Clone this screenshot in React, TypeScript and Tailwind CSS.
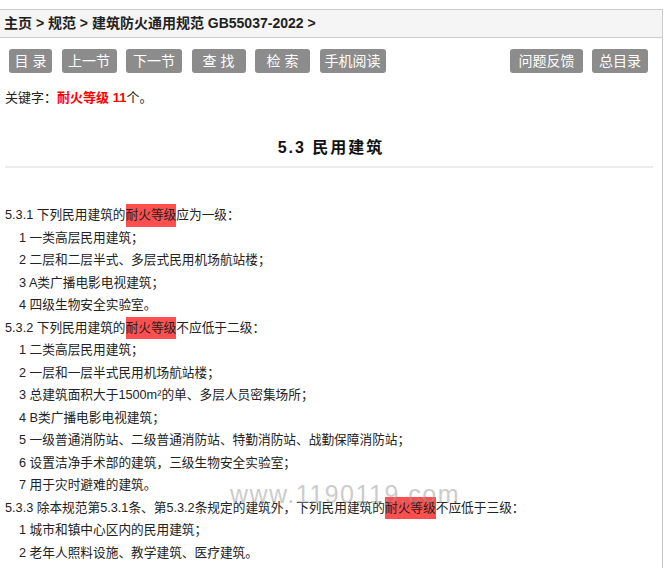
import React from "react";

const HL = ({ children }: { children: React.ReactNode }) => (
  <span className="inline-block bg-[#ff4f4f] leading-[22.5px] align-top">{children}</span>
);

const buttonsLeft: [string, string][] = [
  ["目 录", "w-[43px]"],
  ["上一节", "w-[55px]"],
  ["下一节", "w-[56px]"],
  ["查 找", "w-[54px]"],
  ["检 索", "w-[55px]"],
  ["手机阅读", "w-[66px]"],
];

const Btn = ({ label, w }: { label: string; w: string }) => (
  <div
    className={`${w} h-[24px] rounded-[3px] bg-[#8c8c8c] text-white text-[14px] flex items-center justify-center leading-none whitespace-pre`}
  >
    {label}
  </div>
);

export default function App() {
  const font = "font-['Liberation_Sans','Noto_Sans_CJK_SC',sans-serif]";
  return (
    <div className={`${font} bg-white w-[671px] h-[568px] overflow-hidden text-[#222]`}>
      <div className="relative mt-[9px] w-[663px] h-[600px] border-t border-r border-[#cccccc]">
        <div className="h-[28px] bg-[#f5f5f5] border-b border-[#cccccc] pl-[4px] flex items-center font-bold text-[14px] text-[#222] whitespace-pre">
          主页 &gt; 规范 &gt; 建筑防火通用规范 GB55037-2022 &gt;
        </div>
        <div className="pt-[11px] pl-[9px] pr-[14px] flex justify-between">
          <div className="flex gap-[9.5px]">
            {buttonsLeft.map(([l, w]) => (
              <Btn key={l} label={l} w={w} />
            ))}
          </div>
          <div className="flex gap-[9px]">
            <Btn label="问题反馈" w="w-[73px]" />
            <Btn label="总目录" w="w-[56px]" />
          </div>
        </div>
        <div className="mt-[15px] pl-[5px] text-[13px] leading-[20px]">
          关键字：<span className="text-[#ff0000] font-bold">耐火等级 11</span>个。
        </div>
        <div className="mt-[28px] text-center font-bold text-[16px] tracking-[2px] leading-[24px] text-[#111]">
          5.3 民用建筑
        </div>
        <div className="ml-[5px] mr-[9px] mt-[6px] h-[2px] bg-[#ebebeb]" />
        <div className="mt-[36px] pl-[5px] text-[12.7px] leading-[22.5px]">
          <div>
            5.3.1 下列民用建筑的<HL>耐火等级</HL>应为一级：
          </div>
          <div className="pl-[14px]">1 一类高层民用建筑；</div>
          <div className="pl-[14px]">2 二层和二层半式、多层式民用机场航站楼；</div>
          <div className="pl-[14px]">3 A类广播电影电视建筑；</div>
          <div className="pl-[14px]">4 四级生物安全实验室。</div>
          <div>
            5.3.2 下列民用建筑的<HL>耐火等级</HL>不应低于二级：
          </div>
          <div className="pl-[14px]">1 二类高层民用建筑；</div>
          <div className="pl-[14px]">2 一层和一层半式民用机场航站楼；</div>
          <div className="pl-[14px]">
            3 总建筑面积大于1500m²的单、多层人员密集场所；
          </div>
          <div className="pl-[14px]">4 B类广播电影电视建筑；</div>
          <div className="pl-[14px]">
            5 一级普通消防站、二级普通消防站、特勤消防站、战勤保障消防站；
          </div>
          <div className="pl-[14px]">6 设置洁净手术部的建筑，三级生物安全实验室；</div>
          <div className="pl-[14px]">7 用于灾时避难的建筑。</div>
          <div>
            5.3.3 除本规范第5.3.1条、第5.3.2条规定的建筑外，下列民用建筑的<HL>耐火等级</HL>不应低于三级：
          </div>
          <div className="pl-[14px]">1 城市和镇中心区内的民用建筑；</div>
          <div className="pl-[14px]">2 老年人照料设施、教学建筑、医疗建筑。</div>
        </div>
        <div className="absolute left-[230px] top-[470px] text-[25px] tracking-[1.5px] leading-[29px] text-[#9a9a9a] opacity-50 pointer-events-none whitespace-pre font-['Liberation_Sans',sans-serif]">
          www.1190119.com
        </div>
      </div>
    </div>
  );
}
